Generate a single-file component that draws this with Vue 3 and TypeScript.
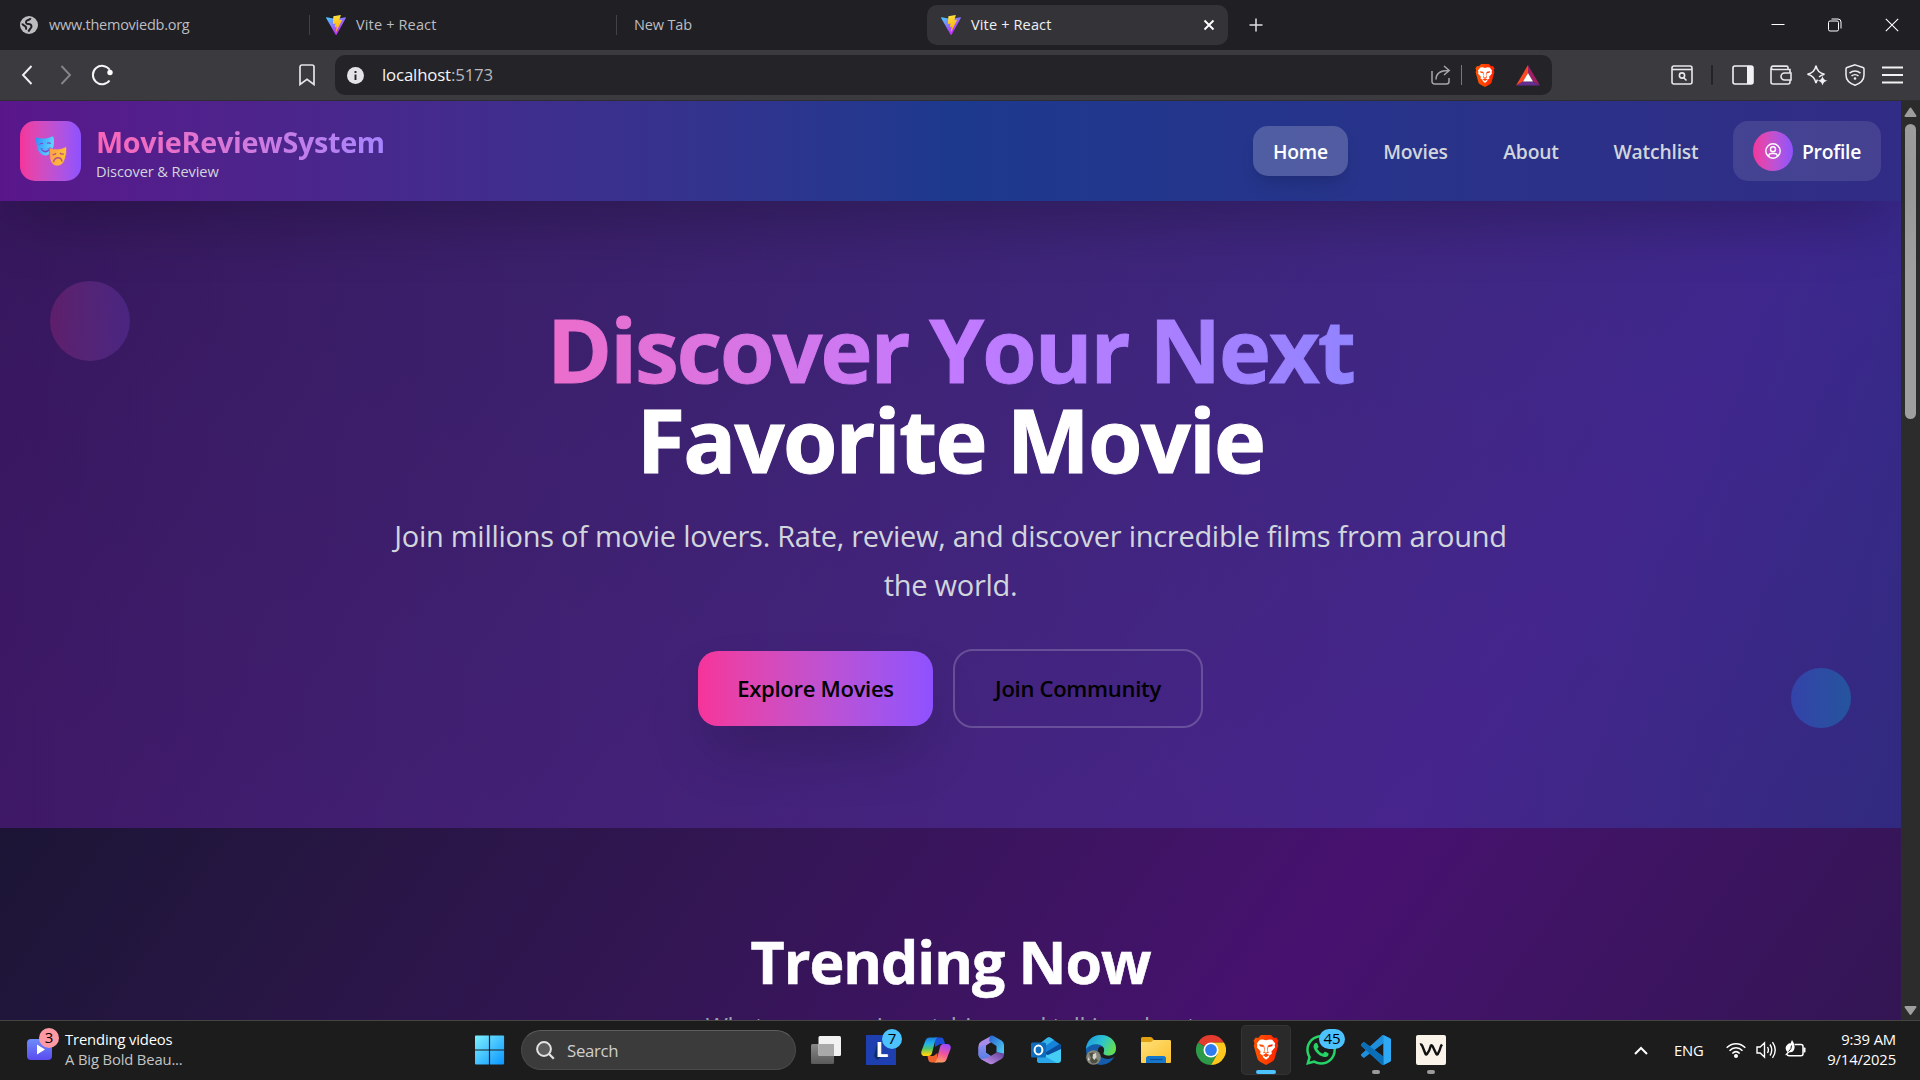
<script setup lang="ts">
interface NavLink {
  label: string
  width: number
  active?: boolean
}

const links: NavLink[] = [
  { label: 'Home', width: 95, active: true },
  { label: 'Movies', width: 105 },
  { label: 'About', width: 96 },
  { label: 'Watchlist', width: 124 },
]

const vitePath =
  'M255.153 37.938L134.897 252.976c-2.483 4.44-8.862 4.466-11.382.048L.875 37.958c-2.746-4.814 1.371-10.646 6.827-9.67l120.385 21.517a6.537 6.537 0 0 0 2.322-.004l117.867-21.483c5.438-.991 9.574 4.796 6.877 9.62Z'
const boltPath =
  'M185.432.063L96.44 17.501a3.268 3.268 0 0 0-2.634 3.014l-5.474 92.456a3.268 3.268 0 0 0 3.997 3.378l24.777-5.718c2.318-.535 4.413 1.507 3.936 3.838l-7.361 36.047c-.495 2.426 1.782 4.5 4.151 3.78l15.304-4.649c2.372-.72 4.652 1.36 4.15 3.788l-11.698 56.621c-.732 3.542 3.979 5.473 5.943 2.437l1.313-2.028l72.516-144.72c1.215-2.423-.88-5.186-3.54-4.672l-25.505 4.922c-2.396.462-4.435-1.77-3.759-4.114l16.646-57.705c.677-2.35-1.37-4.583-3.769-4.113Z'
</script>

<template>
  <div class="screen">
    <!-- shared gradients and symbols -->
    <svg class="defs" width="0" height="0">
      <defs>
        <linearGradient id="viteA" x1="0" x2="0.6" y1="0" y2="0.8"><stop offset="0" stop-color="#41d1ff" /><stop offset="1" stop-color="#bd34fe" /></linearGradient>
        <linearGradient id="viteB" x1="0.4" x2="0.6" y1="0" y2="1"><stop offset="0" stop-color="#ffea83" /><stop offset=".08" stop-color="#ffdd35" /><stop offset="1" stop-color="#ffa800" /></linearGradient>
        <linearGradient id="braveG" x1="0" x2="1" y1="0" y2="0"><stop offset="0" stop-color="#ff5601" /><stop offset=".5" stop-color="#ff4000" /><stop offset="1" stop-color="#ff1f01" /></linearGradient>
        <symbol id="vite" viewBox="0 0 256 257">
          <path fill="url(#viteA)" :d="vitePath" />
          <path fill="url(#viteB)" :d="boltPath" />
        </symbol>
        <symbol id="lion" viewBox="0 0 26 30">
          <path d="M8 0h10l3 3 2.300-.4 2.200 3.100-1 2.600.7 2.500-3.400 12.200c-.5 1.800-1.500 2.700-2.800 3.700L13 30l-6-3.300c-1.400-1-2.300-1.900-2.800-3.700L.8 10.800l.7-2.500-1-2.600 2.200-3.100L5 3z" />
          <path fill="#fff" d="M13 5.200l3.200-.8 3 .3 3 3.900-.6 1.700.5 2-3.700 4.300.5 2.200-2.700 1.700-.2 1.800-3 2.500-3-2.500-.2-1.800-2.700-1.700.5-2.200-3.700-4.300.5-2-.6-1.700 3-3.900 3-.3z" />
          <path d="M6.300 9.300l4.200.8.500 1.300-1 .7-3.300-.9zM19.700 9.300l-4.200.8-.5 1.300 1 .7 3.300-.9zM10.500 11.500l.9 4.300-1.400 1.600 3 1.100 3-1.100-1.400-1.600.9-4.300-.8-.4-.6 4.600.7 1.300-1.800.7-1.800-.7.7-1.300-.6-4.600zM9.700 20l3.300-1.500 3.300 1.500-3.300 2.200z" />
        </symbol>
      </defs>
    </svg>

    <!-- tab strip -->
    <div class="tabs">
      <div class="tab t1">
        <svg width="18" height="18" viewBox="0 0 18 18"><circle cx="9" cy="9" r="9" fill="#bdbdc0" /><path d="M10.500 2.200c-.3 1.800-1.800 1.600-3.200 2.100-1.300.6-1.700 2.200-.8 3.100 1 .9 2.600.4 3.800 1 1.400.8 1.500 2.400.5 3.500-1 .9-1 2.300-2.600 3.600M2.200 7.500c.5 1.900 2.600 2 3.600 3.300.5.900.4 1.800.3 2.800" fill="none" stroke="#1f1f24" stroke-width="2" stroke-linejoin="round" /></svg>
        <span class="wwwt">www.themoviedb.org</span>
      </div>
      <div class="tab t2"><svg width="20" height="20"><use href="#vite" /></svg><span>Vite + React</span></div>
      <div class="tab t3"><span class="newt">New Tab</span></div>
      <div class="tab t4">
        <svg width="20" height="20"><use href="#vite" /></svg><span>Vite + React</span>
        <svg class="x" width="12" height="12" viewBox="0 0 12 12"><path d="M1.500 1.500l9 9m0-9l-9 9" stroke="#fff" stroke-width="1.900" /></svg>
      </div>
      <svg class="plus" width="14" height="14" viewBox="0 0 14 14"><path d="M7 .5v13M.5 7h13" stroke="#e0e0e3" stroke-width="1.500" /></svg>
      <div class="win">
        <svg width="14" height="14" viewBox="0 0 14 14"><path d="M.5 6.500h13" stroke="#fff" /></svg>
        <svg width="14" height="14" viewBox="0 0 14 14" fill="none" stroke="#fff"><rect x=".5" y="3" width="10" height="10" rx="1.500" /><path d="M3.500 1h6.500a3 3 0 0 1 3 3v6.500" /></svg>
        <svg width="14" height="14" viewBox="0 0 14 14"><path d="M.8.8l12.400 12.400m0-12.400L.8 13.200" stroke="#fff" stroke-width="1.100" /></svg>
      </div>
    </div>

    <!-- toolbar -->
    <div class="toolbar">
      <div class="tools-l">
        <svg width="12" height="20" viewBox="0 0 12 20" fill="none" stroke="#f2f2f4" stroke-width="1.900"><path d="M10.500 1L2 10l8.500 9" /></svg>
        <svg class="fwd" width="12" height="20" viewBox="0 0 12 20" fill="none" stroke="#85858a" stroke-width="1.900"><path d="M1.500 1l8.500 9-8.500 9" /></svg>
        <svg class="rel" width="23" height="22" viewBox="0 0 23 22" fill="none"><path d="M18.500 16.500A9.200 9.200 0 1 1 18.700 5.800" stroke="#f5f5f7" stroke-width="2" /><circle cx="19" cy="8.500" r="2.700" fill="#fff" /></svg>
        <svg class="bm" width="16" height="22" viewBox="0 0 16 22" fill="none" stroke="#e4e4e7" stroke-width="1.700"><path d="M1 20V3a2 2 0 0 1 2-2h10a2 2 0 0 1 2 2v17.500l-7-5.200-7 5.200z" /></svg>
      </div>
      <div class="url">
        <svg width="17" height="17" viewBox="0 0 17 17"><circle cx="8.500" cy="8.500" r="8.500" fill="#e4e4e8" /><path d="M8.500 4v2M8.500 7.500v5.500" stroke="#242428" stroke-width="1.900" /></svg>
        <span><b>localhost</b>:5173</span>
        <svg class="share" width="20" height="20" viewBox="0 0 20 20" fill="none" stroke="#a6a6aa" stroke-width="1.500"><path d="M1 6v10.500A2.500 2.500 0 0 0 3.500 19h12a2.500 2.500 0 0 0 2.500-2.500V13M5 14.500C5 9 9 5.500 17.500 5.500M13 1l5.200 4.500L13 10" /></svg>
        <i class="sep"></i>
        <svg class="bl" width="20" height="23" fill="url(#braveG)"><use href="#lion" /></svg>
        <svg class="bat" width="24" height="21" viewBox="0 0 24 21"><path d="M12 0L0 20.500l7-4L12 8z" fill="#ff4724" /><path d="M12 0l12 20.500-7-4L12 8z" fill="#9e1f63" /><path d="M0 20.500h24l-7-4H7z" fill="#662d91" /><path d="M12 8l5 8.500H7z" fill="#fff" /></svg>
      </div>
      <div class="tools-r">
        <svg width="22" height="20" viewBox="0 0 22 20" fill="none" stroke="#e8e8ea" stroke-width="1.600"><rect x="1" y="1" width="20" height="18" rx="2" /><path d="M1 4.500h20" /><circle cx="11" cy="10.500" r="2.600" /><path d="M12.500 12.500l3 3" /></svg>
        <i class="vs"></i>
        <svg class="side" width="22" height="20" viewBox="0 0 22 20"><rect x="1" y="1" width="20" height="18" rx="2" fill="none" stroke="#f2f2f4" stroke-width="1.600" /><path d="M15 1h6v18h-6z" fill="#f2f2f4" /></svg>
        <svg class="wal" width="22" height="20" viewBox="0 0 22 20" fill="none" stroke="#e8e8ea" stroke-width="1.600"><path d="M20 6.500V4.500H3a1.700 1.700 0 0 1 0-3.400h13.500q1.500 0 1.500 1.500v2M1 3v14a2 2 0 0 0 2 2h15a2 2 0 0 0 2-2v-2" /><path d="M21 8h-6.500a3.500 3.500 0 0 0 0 7H21zM20 6v2" /></svg>
        <svg class="spk" width="22" height="22" viewBox="0 0 22 22" fill="none" stroke="#f0f0f2" stroke-width="1.600"><path d="M10 1.500q1 7 8.500 8.800-3.500.9-5.400 2.700M10 1.500Q8.900 8.500 1.500 10.300 8.500 12 10 19q.5-2 1.500-3.400" /><path d="M16.500 12q.7 4.200 5 4.700-4.200.6-5 4.800-.7-4.200-5-4.800 4.300-.5 5-4.700z" fill="#f0f0f2" stroke="none" /></svg>
        <svg class="shd" width="20" height="22" viewBox="0 0 20 22" fill="none" stroke="#f0f0f2" stroke-width="1.500"><path d="M10 .9l8 2.600q1 .4 1 1.500v6c0 5-4 8.500-9 10.200C5 19.500 1 16 1 11V5q0-1.100 1-1.500z" /><path d="M4.500 9.200c3.300-2.700 7.700-2.700 11 0M6.500 12c2-1.800 5-1.800 7 0" /><circle cx="10" cy="14.500" r="1.300" fill="#f0f0f2" stroke="none" /></svg>
        <svg class="menu" width="21" height="18" viewBox="0 0 21 18"><path d="M0 1.500h21M0 9h21M0 16.500h21" stroke="#f2f2f4" stroke-width="1.800" /></svg>
      </div>
    </div>

    <!-- web page -->
    <div class="viewport">
      <div class="page">
        <header class="navbar">
          <div class="logo">
            <svg width="32" height="32" viewBox="0 0 32 32">
              <defs><linearGradient id="mb" x1="0" x2="1" y1="0" y2=".3"><stop offset="0" stop-color="#2d8dfa" /><stop offset="1" stop-color="#5fd8ff" /></linearGradient><linearGradient id="my" x1="0" x2="1"><stop offset="0" stop-color="#ffa04d" /><stop offset="1" stop-color="#ffc62e" /></linearGradient></defs>
              <path fill="url(#mb)" d="M1 2.500c5.500 1.700 11.500 1.400 17-1.300C19.300 4 19.300 8 18.300 12c-1 4.500-4 8.300-7.600 8.500C6 20.700 3 16 2.200 12.500 1.300 8.500.8 5 1 2.500z" />
              <path fill="none" stroke="#7c49c8" stroke-width="1.200" d="M4.500 9.500q1.500-2 3.700-.8M12 8.300q2.200-1.200 3.700.4" /><path fill="#7c49c8" d="M5.500 13c3.500 1.500 7 1.200 10-.8-.6 3.300-2.300 5-4.700 5.200-2.500.1-4.300-1.500-5.300-4.400z" /><path fill="#4fb6ff" d="M7 13.700c2.700.7 5.200.5 7.300-.6-.6 1.800-1.900 2.600-3.500 2.700-1.700 0-3-.6-3.800-2.100z" />
              <path fill="url(#my)" stroke="#b455dc" stroke-width=".8" d="M14.500 12.800c5.500 2 11.500 1.600 16.800-1.400.6 4 .2 8-1.100 12-1.200 4.300-4 7.300-7.600 7.600-4.300.2-7-3.300-7.700-7.300-.5-3.700-.7-7.500-.4-10.900z" />
              <path fill="none" stroke="#b4508f" stroke-width="1.400" d="M17.500 19.500q2.500.5 3.500-1.500M25 17.800q1.300 2 3.800 1M18.500 27c1.500-5.500 7.500-5.500 8.500-.5" />
            </svg>
          </div>
          <div class="brand"><strong>MovieReviewSystem</strong><small>Discover &amp; Review</small></div>
          <nav>
            <a v-for="l in links" :key="l.label" :class="{ active: l.active }" :style="{ width: l.width + 'px' }">{{ l.label }}</a>
            <a class="profile">
              <span class="avatar"><svg width="16" height="16" viewBox="0 0 16 16" fill="none" stroke="#fff" stroke-width="1.400"><circle cx="8" cy="8" r="7.200" /><circle cx="8" cy="6.200" r="2.500" /><path d="M3.500 13.300c.3-2 1.500-2.800 3-2.800h3c1.500 0 2.700.8 3 2.800" /></svg></span>Profile</a>
          </nav>
        </header>

        <section class="hero">
          <div class="orb pink"></div>
          <div class="orb blue"></div>
          <h1><span>Discover Your Next</span><em>Favorite Movie</em></h1>
          <p>Join millions of movie lovers. Rate, review, and discover incredible films from around<br />the world.</p>
          <div class="cta"><button class="explore">Explore Movies</button><button class="join">Join Community</button></div>
        </section>

        <section class="trending">
          <h2>Trending Now</h2>
          <p>What everyone is watching and talking about</p>
        </section>
      </div>
      <div class="scroll">
        <svg width="13" height="11" viewBox="0 0 13 11"><path d="M6.500 1.500L11.500 9h-10z" fill="#9f9f9f" stroke="#9f9f9f" stroke-width="2" stroke-linejoin="round" /></svg>
        <div class="thumb"></div>
        <svg class="dn" width="13" height="11" viewBox="0 0 13 11"><path d="M6.500 9L1.500 2h10z" fill="#9f9f9f" stroke="#9f9f9f" stroke-width="2" stroke-linejoin="round" /></svg>
      </div>
    </div>

    <!-- taskbar -->
    <footer class="taskbar">
      <div class="widget">
        <div class="wicon">
          <svg width="25" height="21" viewBox="0 0 25 21"><defs><linearGradient id="wd" x1="0" x2="0" y1="0" y2="1"><stop offset="0" stop-color="#6c8dfa" /><stop offset="1" stop-color="#5a4bf0" /></linearGradient></defs><rect width="25" height="21" rx="4" fill="url(#wd)" /><path d="M10 5.500v10l8-5z" fill="#fff" /></svg>
          <b class="badge red">3</b>
        </div>
        <div class="wtext"><span>Trending videos</span><span class="dim">A Big Bold Beau...</span></div>
      </div>
      <svg class="start" width="30" height="30" viewBox="0 0 30 30"><defs><linearGradient id="st" x1="0" x2="1" y1="0" y2="1"><stop offset="0" stop-color="#7df0ff" /><stop offset="1" stop-color="#0a95ff" /></linearGradient></defs><path fill="url(#st)" d="M1 .5H13.900v14H0v-13a1 1 0 0 1 1-1zM15.100.5h13a1 1 0 0 1 1 1v13h-14zM0 15.600h13.900v14H1a1 1 0 0 1-1-1zM15.100 15.600h14v13a1 1 0 0 1-1 1h-13z" /></svg>
      <div class="search"><svg width="19" height="19" viewBox="0 0 19 19" fill="none" stroke="#e2e2e2" stroke-width="2"><circle cx="8" cy="8" r="6.900" fill="#5c5c5c" /><path d="M12.800 12.800l5 5" stroke-width="2.300" /></svg><span>Search</span></div>
      <div class="apps">
        <div class="app"><svg width="30" height="28" viewBox="0 0 30 28"><defs><linearGradient id="tv" x1="0" x2="0" y1="0" y2="1"><stop offset="0" stop-color="#888" /><stop offset="1" stop-color="#5a5a5a" /></linearGradient></defs><rect y="8" width="23" height="20" rx="1.500" fill="url(#tv)" /><rect x="7.500" y="0" width="22.500" height="20" rx="1.500" fill="#f2f2f2" /><path d="M7.500 8H23v12H9a1.500 1.500 0 0 1-1.500-1.500z" fill="#a9a9a9" /></svg></div>
        <div class="app">
          <svg width="30" height="30" viewBox="0 0 30 30"><rect width="30" height="30" fill="#1e3fb0" /><path d="M11 8l-3 13 3 4 4-3z" fill="#0c2f62" /><text x="9.500" y="22" font-family="Open Sans, sans-serif" font-weight="700" font-size="22" fill="#fff" textLength="13" lengthAdjust="spacingAndGlyphs">L</text></svg>
          <b class="badge blue b7">7</b>
        </div>
        <div class="app">
          <svg width="30" height="28" viewBox="0 0 30 28">
            <defs>
              <linearGradient id="cp1" x1="0" x2="0" y1="0" y2="1"><stop offset="0" stop-color="#1b7fe0" /><stop offset=".35" stop-color="#22b4e8" /><stop offset=".6" stop-color="#4fc66a" /><stop offset=".9" stop-color="#f5d313" /></linearGradient>
              <linearGradient id="cp2" x1=".6" x2=".3" y1="0" y2="1"><stop offset="0" stop-color="#a048ff" /><stop offset=".5" stop-color="#f0559a" /><stop offset="1" stop-color="#ffa25c" /></linearGradient>
            </defs>
            <path d="M14 1.500h5.500c2.200 0 3 1.200 3.500 3l1 3.500h-5l-5 3z" fill="#1c4fd8" /><path d="M9 1.500h8.500c-2 0-2.800 1.400-3.400 3.500L11 17c-.6 2-1.500 3-3.500 3H4c-3 0-4.300-2-3.500-5L4.300 5C5.200 2.500 6.500 1.500 9 1.500z" fill="url(#cp1)" />
            <path d="M16 26.500h-5c-2.500 0-3.300-1.200-3.800-3L6.500 20h6l4-3z" fill="#f0622e" /><path d="M21 26.500h-8.500c2 0 2.800-1.400 3.400-3.500L19 11c.6-2 1.500-3 3.500-3H26c3 0 4.300 2 3.500 5l-3.800 10c-.9 2.500-2.200 3.500-4.700 3.500z" fill="url(#cp2)" />
          </svg>
        </div>
        <div class="app">
          <svg width="28" height="30" viewBox="0 0 28 30">
            <defs><linearGradient id="m1" x1="0" x2="0" y1="0" y2="1"><stop offset="0" stop-color="#8f8df0" /><stop offset="1" stop-color="#4a7be4" /></linearGradient><linearGradient id="m2" x1="0" x2="1" y1="0" y2="1"><stop offset="0" stop-color="#2a5fd0" /><stop offset="1" stop-color="#4ed6f5" /></linearGradient><linearGradient id="m3" x1="0" x2="1" y1="1" y2="0"><stop offset="0" stop-color="#cf9af5" /><stop offset="1" stop-color="#5b3c92" /></linearGradient></defs>
            <path d="M14 1L4 6.500Q1.500 8 1.500 11v9.500L9 17v-6.500L19 4z" fill="#a98bea" /><path d="M13 1q2-1 4 .2l7.500 4.300Q27 7 27 10v10l-7.500-3v-6L12 6z" fill="url(#m2)" /><path d="M1.500 12v8q0 2.500 2.300 4L10 27.500l5-6-6-4V9z" fill="url(#m1)" /><path d="M27 18.500q0 4-2.500 5.500l-8.300 4.700q-2.200 1-4.400-.2L4 24l6-1 10-6z" fill="url(#m3)" /><path d="M14.200 9.800l4.800 2.700v5l-4.800 2.900-4.700-2.900v-5z" fill="#1c1c1c" />
          </svg>
        </div>
        <div class="app"><svg width="30" height="28" viewBox="0 0 30 28"><path d="M5 10.500L16 2q2-1.500 4 0l10 7v9H5z" fill="#1683d8" /><path d="M8 8.500L16 2q2-1.500 4 0l3 2L10 13z" fill="#35b6ea" /><path d="M12 18L28.500 8 30 9.500v8L18 23z" fill="#0a4d9e" /><path d="M7 16l10 3 13-6v11q0 3-3 3H9q-3 0-3-3z" fill="#45cdf5" /><path d="M6 16l20 11H9q-3 0-3-3z" fill="#2aa5e8" /><rect y="6.500" width="15" height="15" rx="1.500" fill="#0f6cbd" /><ellipse cx="7.500" cy="14" rx="3.900" ry="4.400" fill="none" stroke="#fff" stroke-width="2" /></svg></div>
        <div class="app">
          <svg width="30" height="30" viewBox="0 0 30 30">
            <defs><linearGradient id="e1" x1="0" x2="1" y1=".2" y2=".6"><stop offset="0" stop-color="#1e9be0" /><stop offset=".5" stop-color="#2cc3d0" /><stop offset="1" stop-color="#66e04a" /></linearGradient></defs>
            <circle cx="15" cy="15" r="15" fill="#155cab" /><path d="M0 14.500C0 6 6.500 0 15 0c8.500 0 15 5.800 15 13 0 5-3.500 7.700-7.500 7.700-3.500 0-5.500-1.300-5.200-2.600 1.600-2.500 1.500-7.600-4.800-8.600C7 8.800 2 11 0 14.500z" fill="url(#e1)" /><path d="M12.500 13c-1.500 4 0 7.500 3.500 9.500 4 2.200 8.500 1.700 12.500-.7l1.500-1.300v-4c-2 3.500-4.500 4.200-7.500 4.200-3.500 0-5.500-1.300-5.200-2.600.9-1.500 1.100-3.500.3-5.200-1.500-1.800-3.500-1.700-5.100.1z" fill="#1c1c1c" />
            <circle cx="7.500" cy="22.500" r="7.300" fill="#86857a" /><path d="M3 18.500l4-1 3 2-1 3 3 3-2 2.500-4 .5-2-3 1-3z" fill="#4a4f40" /><path d="M7 19l3-1 .5 4-2 3-2-2zM2 22l2 3-2 .5z" fill="#d6d3cc" />
          </svg>
        </div>
        <div class="app"><svg width="30" height="26" viewBox="0 0 30 26"><defs><linearGradient id="fo" x1="0" x2="1" y1="0" y2="1"><stop offset="0" stop-color="#ffe07a" /><stop offset="1" stop-color="#fcc02d" /></linearGradient></defs><path d="M0 8V1.500Q0 0 1.500 0h8q1 0 1.700.8L13 3h15.500Q30 3 30 4.500V8z" fill="#e0a012" /><path d="M0 5h10l2.500-2H28.500Q30 3 30 4.500V25q0 1-1 1H1q-1 0-1-1z" fill="url(#fo)" /><path d="M5 26v-4.500Q5 19 7.500 19h15q2.500 0 2.500 2.500V26z" fill="#1477cd" /><path d="M9 22.500h12.500" stroke="#0c4f92" stroke-width="1.200" /></svg></div>
        <div class="app"><svg width="30" height="30" viewBox="0 0 30 30"><path d="M15 15L2 7.500A15 15 0 0 1 28 7.500H15z" fill="#e33b2e" /><path d="M15 15l6.500 3.700L15 30A15 15 0 0 1 2 7.500z" fill="#2c9a48" /><path d="M15 7.500h13A15 15 0 0 1 15 30l6.500-11.300z" fill="#fdc81d" /><circle cx="15" cy="15" r="7.500" fill="#fff" /><circle cx="15" cy="15" r="5.900" fill="#2f7bf0" /></svg></div>
        <div class="app on"><svg width="26" height="30" fill="url(#braveG)"><use href="#lion" /></svg></div>
        <div class="app">
          <svg width="30" height="30" viewBox="0 0 24 24" fill="#25d366"><path d="M17.472 14.382c-.297-.149-1.758-.867-2.030-.967-.273-.099-.471-.148-.67.15-.197.297-.767.966-.94 1.164-.173.199-.347.223-.644.075-.297-.15-1.255-.463-2.390-1.475-.883-.788-1.480-1.761-1.653-2.059-.173-.297-.018-.458.13-.606.134-.133.298-.347.446-.52.149-.174.198-.298.298-.497.099-.198.05-.371-.025-.52-.075-.149-.669-1.612-.916-2.207-.242-.579-.487-.5-.669-.51-.173-.008-.371-.01-.57-.01-.198 0-.52.074-.792.372-.272.297-1.040 1.016-1.040 2.479 0 1.462 1.065 2.875 1.213 3.074.149.198 2.096 3.200 5.077 4.487.709.306 1.262.489 1.694.625.712.227 1.360.195 1.871.118.571-.085 1.758-.719 2.006-1.413.248-.694.248-1.289.173-1.413-.074-.124-.272-.198-.57-.347m-5.421 7.403h-.004a9.870 9.870 0 01-5.031-1.378l-.361-.214-3.741.982.998-3.648-.235-.374a9.860 9.860 0 01-1.510-5.260c.001-5.450 4.436-9.884 9.888-9.884 2.640 0 5.122 1.030 6.988 2.898a9.825 9.825 0 012.893 6.994c-.003 5.450-4.437 9.884-9.885 9.884m8.413-18.297A11.815 11.815 0 0012.050 0C5.495 0 .16 5.335.157 11.892c0 2.096.547 4.142 1.588 5.945L.057 24l6.305-1.654a11.882 11.882 0 005.683 1.448h.005c6.554 0 11.890-5.335 11.893-11.893a11.821 11.821 0 00-3.480-8.413z" /></svg>
          <b class="badge blue b45">45</b>
        </div>
        <div class="app run"><svg width="30" height="30" viewBox="0 0 24 24"><path fill="#1f8fdc" fill-rule="evenodd" d="M23.150 2.587L18.210.21a1.494 1.494 0 0 0-1.705.29l-9.460 8.630-4.120-3.128a.999.999 0 0 0-1.276.057L.327 7.261A1 1 0 0 0 .326 8.740L3.899 12 .326 15.260a1 1 0 0 0 .001 1.479L1.650 17.940a.999.999 0 0 0 1.276.057l4.120-3.128 9.460 8.630a1.492 1.492 0 0 0 1.704.29l4.942-2.377A1.500 1.500 0 0 0 24 20.060V3.939a1.500 1.500 0 0 0-.85-1.352zm-5.146 14.861L10.826 12l7.178-5.448v10.896z" /><path fill="#2fa9f5" d="M18 .1l5.150 2.487A1.500 1.500 0 0 1 24 3.939V20.060a1.500 1.500 0 0 1-.85 1.352L18 23.900z" /><path fill="#0b6fb8" d="M.327 7.261L1.650 6.060a1 1 0 0 1 1.276-.057L18 17.448V23.900q-.9 0-1.500-.4L.326 8.740a1 1 0 0 1 0-1.479z" /></svg></div>
        <div class="app run"><svg width="30" height="30" viewBox="0 0 30 30"><rect width="30" height="30" rx="2" fill="#faf3ea" /><path d="M4 9.500q1.500-.5 2.200 1.200l3.300 8.300q.6 1.200 1.500 0 2.700-3.500 3.800-8.300 1-1 1.800.5l3.700 7.800q.7 1.200 1.500 0 2-3.500 3.200-8l1-1.500" fill="none" stroke="#111" stroke-width="2.400" stroke-linejoin="round" /></svg></div>
      </div>
      <div class="tray">
        <svg class="chev" width="14" height="9" viewBox="0 0 14 9"><path d="M1 8l6-6 6 6" fill="none" stroke="#fff" stroke-width="2" /></svg>
        <span class="eng">ENG</span>
        <svg class="wifi" width="20" height="16" viewBox="0 0 20 16" fill="none" stroke="#fff" stroke-width="1.500"><path d="M.7 5.800c5.200-5.400 13.400-5.400 18.600 0M3.500 8.700c3.700-3.800 9.300-3.800 13 0M6.300 11.500c2.200-2.200 5.200-2.200 7.400 0" /><circle cx="10" cy="14" r="2" fill="#fff" stroke="none" /></svg>
        <svg class="vol" width="21" height="18" viewBox="0 0 21 18" fill="none" stroke="#fff" stroke-width="1.400"><path d="M1 6h3.200L8.500 1.800v14.400L4.200 12H1zM11.500 6q1.800 3 0 6M14 3.500q3.500 5.500 0 11M16.500 1.200q5.500 7.800 0 15.600" /></svg>
        <svg class="batt" width="21" height="18" viewBox="0 0 21 18"><path d="M9.500 4.500H16q2 0 2 2v7.300q0 2-2 2H4q-1.500 0-2-1.500" fill="none" stroke="#fff" stroke-width="1.500" /><path d="M18.500 7.500h1.200q.8 0 .8.800v3.400q0 .8-.8.800h-1.200z" fill="#fff" /><path d="M7 0q3.500 4.500 2.300 9Q8 13 4.500 12.200L1 15.500.3 14.700 2.500 12Q-1 8.500 2 5 4 2.500 5.500 3.500z" fill="#fff" /><path d="M6.500 5.500q.3 3.500-3 6" fill="none" stroke="#1c1c1c" stroke-width="1" /></svg>
        <div class="clock"><span>9:39 AM</span><span>9/14/2025</span></div>
      </div>
    </footer>
  </div>
</template>

<style>
body {
  margin: 0;
  background: #1c1c1c;
}
</style>

<style scoped>
.screen {
  width: 1920px;
  height: 1080px;
  overflow: hidden;
  display: flex;
  flex-direction: column;
  font-family: 'Open Sans', 'Noto Sans', sans-serif;
  color: #fff;
}
.screen *,
.screen {
  box-sizing: border-box;
}
svg {
  display: block;
  flex: none;
}
.defs {
  position: absolute;
}

/* tab strip */
.tabs {
  height: 50px;
  flex: none;
  background: #1f1f24;
  display: flex;
  align-items: center;
  font-size: 14.5px;
  letter-spacing: 0.15px;
  color: #bdbdc0;
  white-space: nowrap;
}
.tab {
  display: flex;
  align-items: center;
  height: 20px;
}
.tab span {
  padding-bottom: 2px;
}
.t1 {
  width: 309px;
  padding-left: 20px;
  gap: 11px;
}
.tab .wwwt {
  letter-spacing: -0.25px;
}
.newt {
  letter-spacing: -0.15px;
}
.t2 {
  width: 307px;
  padding-left: 16px;
  gap: 10px;
  border-left: 1px solid #414147;
}
.t3 {
  width: 311px;
  padding-left: 17px;
  border-left: 1px solid #414147;
}
.t4 {
  width: 301px;
  height: 40px;
  border-radius: 10px;
  background: #343438;
  padding: 0 13px 0 14px;
  gap: 10px;
  color: #f0f0f2;
}
.x {
  margin-left: auto;
}
.plus {
  margin-left: 21px;
}
.win {
  margin: 0 21px 1px auto;
  display: flex;
  gap: 43px;
}

/* toolbar */
.toolbar {
  height: 51px;
  flex: none;
  background: #3b3b3f;
  border-bottom: 1px solid #2e2e32;
  display: flex;
  align-items: center;
}
.tools-l {
  width: 335px;
  padding-left: 21px;
  display: flex;
  align-items: center;
}
.fwd {
  margin-left: 27px;
}
.rel {
  margin-left: 19px;
}
.bm {
  margin-left: 185px;
}
.url {
  width: 1217px;
  height: 40px;
  border-radius: 10px;
  background: #242428;
  display: flex;
  align-items: center;
  padding: 0 12px 0 12px;
}
.url span {
  margin-left: 18px;
  padding-bottom: 2px;
  font-size: 16.8px;
  letter-spacing: -0.15px;
  color: #b8b8bc;
}
.url b {
  font-weight: 400;
  color: #f4f4f6;
}
.share {
  margin-left: auto;
}
.sep {
  width: 1px;
  height: 20px;
  background: #77777b;
  margin-left: 10px;
}
.bl {
  margin-left: 13px;
}
.bat {
  margin-left: 21px;
}
.tools-r {
  flex: 1;
  margin: 0 0 0 119px;
  display: flex;
  align-items: center;
}
.vs {
  width: 2px;
  height: 20px;
  margin-left: 18px;
  background: #242428;
  border-radius: 1px;
}
.side {
  margin-left: 19px;
}
.wal {
  margin-left: 16px;
}
.spk {
  margin-left: 14px;
}
.shd {
  margin-left: 17px;
}
.menu {
  margin-left: 17px;
}

/* page */
.viewport {
  height: 919px;
  flex: none;
  display: flex;
  overflow: hidden;
}
.page {
  width: 1901px;
  height: 2740px;
  background: linear-gradient(to bottom right in oklab, #0f172b, #59168b, #0f172b);
}
.navbar {
  position: relative;
  z-index: 2;
  height: 100px;
  background: linear-gradient(to right in oklab, #59168b, #1c398e, #312c85);
  box-shadow: 0 31px 62px -15px rgba(0, 0, 0, 0.25);
  display: flex;
  align-items: center;
  padding: 0 20px;
}
.logo {
  width: 61px;
  height: 60px;
  border-radius: 15px;
  background: linear-gradient(to right in oklab, #f6339a, #8e51ff);
  display: grid;
  place-items: center;
}
.brand {
  margin: 2px 0 0 15px;
  display: flex;
  flex-direction: column;
  align-items: flex-start;
}
.brand strong {
  font-size: 28.8px;
  line-height: 38px;
  letter-spacing: -0.33px;
  background: linear-gradient(to right in oklab, #fb64b6, #a684ff);
  background-clip: text;
  -webkit-background-clip: text;
  color: transparent;
}
.brand small {
  font-size: 14.6px;
  line-height: 20px;
  letter-spacing: -0.1px;
  color: #d1d5dc;
}
nav {
  margin-left: auto;
  display: flex;
  align-items: center;
  gap: 15px;
}
nav a {
  height: 50px;
  border-radius: 15px;
  display: flex;
  align-items: center;
  justify-content: center;
  font-size: 19.3px;
  font-weight: 600;
  letter-spacing: -0.18px;
  color: #d1d5dc;
}
nav a.active {
  background: rgba(255, 255, 255, 0.2);
  color: #fff;
  box-shadow: 0 12px 19px -4px rgba(0, 0, 0, 0.1), 0 5px 8px -5px rgba(0, 0, 0, 0.1);
}
nav a.profile {
  width: 148px;
  height: 60px;
  background: rgba(255, 255, 255, 0.1);
  color: #fff;
  gap: 9px;
  letter-spacing: -0.25px;
}
.avatar {
  width: 40px;
  height: 40px;
  border-radius: 50%;
  background: linear-gradient(to right in oklab, #f6339a, #8e51ff);
  display: grid;
  place-items: center;
}
.hero {
  position: relative;
  height: 627px;
  padding-top: 103px;
  background: linear-gradient(to right in oklab, rgba(89, 22, 139, 0.5), rgba(28, 57, 142, 0.5));
  text-align: center;
}
.orb {
  position: absolute;
  border-radius: 50%;
}
.orb.pink {
  left: 50px;
  top: 80px;
  width: 80px;
  height: 80px;
  opacity: 0.2;
  background: linear-gradient(to right in oklab, #f6339a, #8e51ff);
}
.orb.blue {
  right: 50px;
  bottom: 100px;
  width: 60px;
  height: 60px;
  opacity: 0.3;
  background: linear-gradient(to right in oklab, #2b7fff, #00b8db);
}
h1 {
  margin: 0 auto;
  width: 1120px;
  font-size: 88px;
  line-height: 90px;
  font-weight: 700;
  letter-spacing: -2px;
}
h1 span {
  display: block;
  background: linear-gradient(to right in oklab, #fb64b6, #c27aff, #7c86ff);
  background-clip: text;
  -webkit-background-clip: text;
  color: transparent;
  -webkit-text-stroke: 1px transparent;
}
h1 em {
  display: block;
  font-style: normal;
  letter-spacing: -1.75px;
  -webkit-text-stroke: 1px #fff;
}
.hero p {
  margin: 28px 0 0;
  font-size: 29px;
  line-height: 48.75px;
  letter-spacing: -0.28px;
  color: #d1d5dc;
}
.cta {
  margin-top: 39px;
  display: flex;
  align-items: center;
  justify-content: center;
  gap: 20px;
}
button {
  font: 550 22px 'Open Sans', sans-serif;
  letter-spacing: -0.28px;
  color: #000;
  border: 0;
  border-radius: 20px;
  padding: 0;
}
.explore {
  width: 235px;
  height: 75px;
  background: linear-gradient(to right in oklab, #f6339a, #8e51ff);
  box-shadow: 0 31px 62px -15px rgba(0, 0, 0, 0.25);
}
.join {
  width: 250px;
  height: 79px;
  background: none;
  border: 2px solid rgba(255, 255, 255, 0.2);
}
.trending {
  height: 2013px;
  padding-top: 103px;
  background: rgba(0, 0, 0, 0.2);
  text-align: center;
}
h2 {
  margin: 0;
  font-size: 59px;
  line-height: 60px;
  font-weight: 700;
  letter-spacing: -1.05px;
  -webkit-text-stroke: 0.6px #fff;
}
.trending p {
  margin: 17px 0 0;
  font-size: 24px;
  line-height: 35px;
  letter-spacing: -0.25px;
  color: #99a1af;
}
.scroll {
  width: 19px;
  background: #2c2c2c;
  display: flex;
  flex-direction: column;
  align-items: center;
  padding: 6px 0 4px;
}
.thumb {
  width: 11px;
  height: 295px;
  margin-top: 6px;
  border-radius: 6px;
  background: #9f9f9f;
}
.dn {
  margin-top: auto;
}

/* taskbar */
.taskbar {
  height: 60px;
  flex: none;
  background: #1c1c1c;
  border-top: 1px solid #454545;
  display: flex;
  align-items: center;
  padding-bottom: 1px;
  font-size: 14.8px;
  white-space: nowrap;
}
.widget {
  width: 475px;
  padding-left: 27px;
  display: flex;
  align-items: center;
}
.wicon {
  position: relative;
  margin-bottom: 1px;
}
.badge {
  position: absolute;
  height: 20px;
  min-width: 20px;
  border-radius: 10px;
  font-weight: 400;
  font-size: 15px;
  line-height: 19px;
  text-align: center;
  color: #000;
}
.red {
  background: #ff99a4;
  left: 12px;
  top: -11px;
}
.blue {
  background: #4cc2ff;
}
.b7 {
  left: 26px;
  top: 4px;
}
.b45 {
  left: 23px;
  top: 4px;
  width: 26px;
}
.wtext {
  margin-left: 13px;
  padding-bottom: 3px;
  display: flex;
  flex-direction: column;
  line-height: 20px;
  letter-spacing: -0.15px;
}
.dim {
  color: #c4c4c4;
}
.search {
  margin-left: 16px;
  width: 275px;
  height: 40px;
  border-radius: 20px;
  background: #3b3b3b;
  border: 1px solid #4a4a4a;
  border-top-color: #5e5e5e;
  display: flex;
  align-items: center;
  padding-left: 14px;
  font-size: 16.8px;
  letter-spacing: -0.3px;
  color: #cfcfcf;
}
.search span {
  margin-left: 12px;
}
.apps {
  display: flex;
  margin-left: 5px;
  gap: 5px;
}
.app {
  position: relative;
  width: 50px;
  height: 50px;
  border-radius: 5px;
  display: grid;
  place-items: center;
}
.app.on {
  background: #2a2a2a;
  box-shadow: inset 0 0 0 1px #333;
}
.app.on::after,
.app.run::after {
  content: '';
  position: absolute;
  bottom: 1px;
  left: 21px;
  width: 8px;
  height: 4px;
  border-radius: 2px;
  background: #9a9a9a;
}
.app.on::after {
  left: 15px;
  width: 20px;
  background: #4cc2ff;
}
.tray {
  margin-left: auto;
  padding-right: 24px;
  display: flex;
  align-items: center;
}
.eng {
  margin-left: 26px;
  padding-bottom: 1px;
  width: 30px;
  letter-spacing: -0.2px;
}
.wifi {
  margin-left: 22px;
}
.vol {
  margin-left: 10px;
}
.batt {
  margin-left: 8px;
  margin-bottom: 2px;
}
.clock {
  margin-left: 20px;
  padding-bottom: 3px;
  width: 70px;
  display: flex;
  flex-direction: column;
  align-items: flex-end;
  line-height: 20px;
  letter-spacing: -0.15px;
}
</style>
